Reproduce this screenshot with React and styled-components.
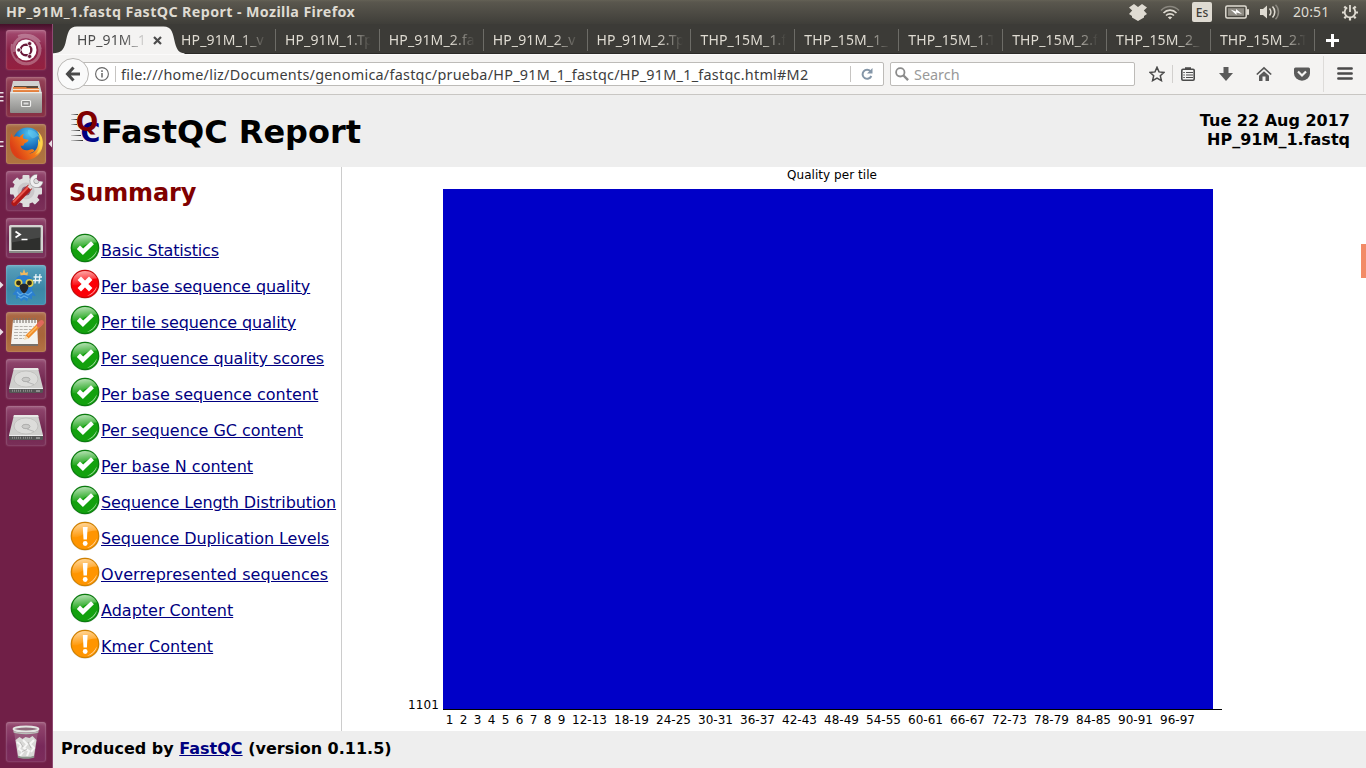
import React from "react";
import styled, { createGlobalStyle } from "styled-components";

const GlobalStyle = createGlobalStyle`
  * { box-sizing: border-box; }
  html, body { margin: 0; padding: 0; }
  body { width: 1366px; height: 768px; overflow: hidden; background: #fff; }
`;

const UI = `"Noto Sans", "Open Sans", sans-serif`;

const Screen = styled.div`
  width: 1366px;
  height: 768px;
  display: flex;
  flex-direction: column;
  overflow: hidden;
  font-family: ${UI};
  svg { display: block; flex: none; }
`;

/* ---------- top panel ---------- */
const Panel = styled.header`
  height: 24px;
  flex: none;
  display: flex;
  align-items: center;
  justify-content: space-between;
  padding: 0 7px 0 6px;
  background: linear-gradient(#646155 0, #5a574e 2px, #3f3e39 100%);
  color: #dfdbd2;
`;
const WindowTitle = styled.div`
  font-size: 14.25px;
  letter-spacing: 0.4px;
  font-weight: 700;
  line-height: 24px;
  white-space: nowrap;
`;
const Indicators = styled.div`
  display: flex;
  align-items: center;
  height: 24px;
`;
const Indicator = styled.div`
  width: ${(p) => p.$w}px;
  margin-right: ${(p) => p.$gap || 0}px;
`;
const Lang = styled.div`
  width: 20px;
  height: 20px;
  margin-right: 13px;
  border-radius: 2px;
  background: #dfdbd2;
  color: #3f3e39;
  font-size: 12px;
  line-height: 21px;
  font-weight: 500;
  text-align: center;
`;
const Clock = styled.div`
  width: 48px;
  font-size: 14px;
  line-height: 24px;
  letter-spacing: 0.1px;
`;

const Desktop = styled.div`
  flex: 1;
  min-height: 0;
  display: flex;
`;

/* ---------- launcher ---------- */
const Launcher = styled.nav`
  width: 53px;
  flex: none;
  display: flex;
  flex-direction: column;
  gap: 7px;
  padding: 6px 0 6px 6px;
  background: linear-gradient(#451029 0, #6b1d44 8px, #701f47 45px, #701f47 100%);
  border-right: 1px solid #8f4a72;
`;
const Tile = styled.div`
  position: relative;
  width: 40px;
  height: 40px;
  flex: none;
  margin-top: ${(p) => (p.$last ? "auto" : 0)};
  border-radius: 3px;
  background: ${(p) => p.$bg};
  box-shadow: inset 0 0 0 1px rgba(255, 255, 255, 0.08), inset 0 2px 3px rgba(255, 255, 255, 0.16),
    0 0 2px rgba(255, 255, 255, 0.2);
`;
const Pips = styled.svg`
  position: absolute;
  left: -6px;
  top: 12px;
`;
const FocusPip = styled.svg`
  position: absolute;
  right: -6px;
  top: 15px;
`;

/* ---------- browser ---------- */
const Browser = styled.div`
  flex: 1;
  min-width: 0;
  display: flex;
  flex-direction: column;
`;
const TabBar = styled.div`
  height: 30px;
  flex: none;
  display: flex;
  background: #3c3b37;
  box-shadow: inset 0 -1px 0 #2b2a27;
`;
const ActiveTab = styled.div`
  position: relative;
  width: 119px;
  height: 30px;
  flex: none;
  display: flex;
  align-items: center;
  padding: 2px 0 0 24px;
  color: #4c4c4c;
`;
const ActiveShape = styled.svg`
  position: absolute;
  left: 0;
  top: 0;
`;
const Tab = styled.div`
  width: 103.9px;
  height: 30px;
  flex: none;
  display: flex;
  align-items: center;
  padding: 2px 0 0 9px;
  color: #dfdbd2;
  background: linear-gradient(#6d6c67, #6d6c67) right 5px / 1px 22px no-repeat;
`;
const TabLabel = styled.span`
  position: relative;
  width: ${(p) => p.$w}px;
  white-space: nowrap;
  font-size: 14px;
  line-height: 20px;
  letter-spacing: 0.15px;
  mask-image: linear-gradient(to right, #000 calc(100% - 25px), transparent);
`;
const CloseIcon = styled.svg`
  position: relative;
  margin-left: 5px;
`;
const NewTab = styled.div`
  height: 30px;
  display: flex;
  align-items: center;
  padding: 2px 0 0 11px;
`;

const NavBar = styled.div`
  height: 41px;
  flex: none;
  display: flex;
  align-items: center;
  padding-bottom: 1px;
  background: #f4f3f2;
  border-bottom: 1px solid #c8c6c3;
  border-top: 1px solid #fbfafa;
`;
const BackButton = styled.div`
  position: relative;
  z-index: 1;
  width: 32px;
  height: 32px;
  margin-left: 4px;
  flex: none;
  border-radius: 50%;
  border: 1px solid #b9b7b4;
  background: #fafafa;
  display: flex;
  align-items: center;
  justify-content: center;
`;
const UrlBar = styled.div`
  width: 803px;
  height: 24px;
  margin-left: -8px;
  padding: 0 10px 0 13px;
  flex: none;
  display: flex;
  align-items: center;
  background: #fff;
  border: 1px solid #bdbbb8;
  border-radius: 2px;
`;
const Divider = styled.div`
  width: 1px;
  height: ${(p) => p.$h}px;
  margin: 0 ${(p) => p.$r}px 0 ${(p) => p.$l}px;
  background: ${(p) => p.$c || "#c6c4c2"};
  flex: none;
`;
const Url = styled.div`
  flex: 1;
  padding-top: 1px;
  white-space: nowrap;
  font-size: 14.4px;
  letter-spacing: 0.25px;
  line-height: 22px;
  color: #3d3d3d;
`;
const SearchBox = styled.div`
  width: 245px;
  height: 24px;
  margin-left: 6px;
  padding-left: 4px;
  flex: none;
  display: flex;
  align-items: center;
  gap: 5px;
  background: #fff;
  border: 1px solid #bdbbb8;
  border-radius: 2px;
  font-size: 14.4px;
  letter-spacing: 0;
  color: #999;
`;
const Tool = styled.div`
  width: 16px;
  margin-left: ${(p) => p.$l}px;
  flex: none;
`;

/* ---------- report page ---------- */
const Page = styled.main`
  position: relative;
  flex: 1;
  min-height: 0;
  display: flex;
  flex-direction: column;
  background: #fff;
  font-family: "DejaVu Sans", sans-serif;
  color: #000;
`;
const ReportHeader = styled.div`
  height: 72px;
  flex: none;
  display: flex;
  justify-content: space-between;
  padding: 0 16px 0 16px;
  background: #eee;
  font-weight: 700;
`;
const Brand = styled.div`
  display: flex;
  padding-top: 15px;
`;
const ReportTitle = styled.h1`
  margin: 0;
  font-size: 32px;
  line-height: 44px;
  font-weight: 700;
  white-space: nowrap;
`;
const FileInfo = styled.div`
  padding-top: 16px;
  text-align: right;
  font-size: 16px;
  line-height: 19px;
`;
const Body = styled.div`
  flex: 1;
  min-height: 0;
  display: flex;
`;
const Summary = styled.aside`
  width: 289px;
  flex: none;
  padding-left: 16px;
  border-right: 1px solid #ccc;
`;
const SummaryTitle = styled.h2`
  margin: 12px 0 24px;
  font-size: 24px;
  line-height: 29px;
  font-weight: 700;
  letter-spacing: -0.1px;
  color: #800000;
`;
const Modules = styled.ul`
  list-style: none;
  margin: 0;
  padding: 0;
`;
const Module = styled.li`
  height: 36px;
  display: flex;
  align-items: flex-start;
`;
const ModuleLink = styled.a`
  padding-top: 9px;
  font-size: 16px;
  line-height: 19px;
  letter-spacing: ${(p) => p.$track}px;
  color: #000080;
  text-decoration: underline;
  white-space: nowrap;
`;
const ChartArea = styled.section`
  flex: 1;
  min-width: 0;
`;
const Footer = styled.footer`
  height: 37px;
  flex: none;
  padding: 8px 0 0 8px;
  background: #eee;
  font-size: 16px;
  line-height: 19px;
  font-weight: 700;
`;
const FooterLink = styled.a`
  color: #000080;
  text-decoration: underline;
`;
const ScrollThumb = styled.div`
  position: absolute;
  right: 0;
  top: 149px;
  width: 5px;
  height: 34px;
  background: #f28b67;
`;

const STATUS = {
  pass: { base: "#13a10e", edge: "#0b7a10", light: "#d5edd3" },
  fail: { base: "#fb0007", edge: "#c40a0a", light: "#ffc9c6" },
  warn: { base: "#ff9500", edge: "#cf8000", light: "#ffe2b5" },
};

function StatusIcon({ kind }) {
  const c = STATUS[kind];
  const id = "g-" + kind;
  return (
    <svg width="32" height="32" viewBox="0 0 32 32">
      <defs>
        <linearGradient id={id} x1="0.3" y1="0" x2="0.5" y2="1">
          <stop offset="0" stopColor={c.light} />
          <stop offset="1" stopColor={c.base} />
        </linearGradient>
      </defs>
      <circle cx="16" cy="16.200" r="14.600" fill="#ddd" opacity="0.7" />
      <circle cx="16" cy="16" r="13.700" fill={c.base} stroke={c.edge} strokeWidth="1.200" />
      <path d="M3.600 17C2.600 8 9 3 16 3c6 0 10.500 3.500 12 7.500C22 10.500 17 12 13 15c-3 2-6 3-9.400 2z" fill={`url(#${id})`} opacity="0.85" />
      <path d="M27.800 18.500c-.8 4.500-4.500 8.400-9.800 9.500 4.500-2 7.800-5 9.800-9.500z" fill="#fff" opacity="0.7" />
      {kind === "pass" && <path d="M7.800 17l3.200-3.400 3.200 2.800 7.800-7.200 2.900 3-11 10.800z" fill="#fff" />}
      {kind === "fail" && <path d="M10.300 10.300l11.400 11.400M21.700 10.300l-11.400 11.400" stroke="#fff" strokeWidth="4.800" />}
      {kind === "warn" && (
        <g fill="#fff">
          <path d="M13.800 7h4.800l-.7 12.500h-3.400z" />
          <circle cx="16.200" cy="23.500" r="2.400" />
        </g>
      )}
    </svg>
  );
}

const MODULES = [
  ["pass", "Basic Statistics", -0.17],
  ["fail", "Per base sequence quality", -0.06],
  ["pass", "Per tile sequence quality", -0.1],
  ["pass", "Per sequence quality scores", -0.03],
  ["pass", "Per base sequence content", 0],
  ["pass", "Per sequence GC content", -0.03],
  ["pass", "Per base N content", 0],
  ["pass", "Sequence Length Distribution", -0.09],
  ["warn", "Sequence Duplication Levels", -0.09],
  ["warn", "Overrepresented sequences", 0.06],
  ["pass", "Adapter Content", 0],
  ["warn", "Kmer Content", 0.08],
];

const TICKS = [
  ...Array.from({ length: 9 }, (_, i) => ({ slot: i, label: String(i + 1) })),
  ...Array.from({ length: 15 }, (_, i) => ({ slot: 10 + 3 * i, label: `${12 + 6 * i}-${13 + 6 * i}` })),
];

function TileChart() {
  return (
    <svg width="1024" height="564" viewBox="342 167 1024 564" fontFamily='"DejaVu Sans", sans-serif' fontSize="12" fill="#000">
      <text x="832" y="179" textAnchor="middle" textLength="90">Quality per tile</text>
      <rect x="443" y="189" width="770" height="520" fill="#0000c8" />
      <rect x="443" y="709" width="779" height="1" />
      <text x="408" y="709" textLength="31">1101</text>
      {TICKS.map((t) => (
        <text key={t.slot} x={449.5 + t.slot * 14} y="724" textAnchor="middle">
          {t.label}
        </text>
      ))}
    </svg>
  );
}

function FastQCLogo() {
  return (
    <svg width="32" height="34" viewBox="0 0 32 34" fontFamily='"DejaVu Sans", sans-serif' fontWeight="700">
      <defs>
        <linearGradient id="speed" x1="0" x2="1">
          <stop offset="0" stopColor="#ccc" />
          <stop offset="1" stopColor="#333" />
        </linearGradient>
      </defs>
      <g fill="url(#speed)">
        <rect x="2" y="4" width="7" height="1" />
        <rect x="2" y="9" width="6" height="1" />
        <rect x="2" y="14" width="6" height="1" />
        <rect x="2" y="20" width="9" height="1" />
        <rect x="2" y="25" width="10" height="1" />
        <rect x="2" y="30" width="12" height="1" />
      </g>
      <text x="11.500" y="31.500" fontSize="27" fill="#000080">C</text>
      <text x="6.800" y="21.300" fontSize="26.500" fill="#800000">Q</text>
    </svg>
  );
}

/* ---------- launcher drawings ---------- */
const UbuntuIcon = () => (
  <svg width="40" height="40" viewBox="0 0 40 40">
    <g fill="none" stroke="#fff" opacity="0.28" strokeWidth="3">
      <path d="M8 22C6 12 14 5 23 7c7 2 11 7 11 12" />
      <path d="M31 12c6 8 2 18-6 21-6 2-12 0-15-4" />
      <path d="M6 14c-2 10 3 18 12 20" strokeWidth="2" />
      <path d="M12 6c8-3 17-1 22 6" strokeWidth="2" />
    </g>
    <circle cx="20" cy="20" r="10.500" fill="#fff" />
    <circle cx="20" cy="20" r="5.300" fill="none" stroke="#6a1a3a" strokeWidth="2.400" />
    <g stroke="#fff" strokeWidth="1.200">
      <path d="M20 20l4.500-8M20 20l4.500 8M20 20h-9" opacity="0.9" />
    </g>
    <circle cx="20" cy="20" r="4.100" fill="#fff" />
    <g fill="#6a1a3a" stroke="#fff" strokeWidth="0.700">
      <circle cx="12.800" cy="20" r="2.100" />
      <circle cx="23.600" cy="13.600" r="2.100" />
      <circle cx="23.600" cy="26.400" r="2.100" />
    </g>
  </svg>
);
const FilesIcon = () => (
  <svg width="40" height="40" viewBox="0 0 40 40">
    <defs>
      <linearGradient id="cab" x2="0" y2="1">
        <stop offset="0" stopColor="#c9c9c6" />
        <stop offset="1" stopColor="#8c8c8a" />
      </linearGradient>
    </defs>
    <path d="M7 4h26l3 13H4z" fill="#d2d2d0" />
    <path d="M8 9h24v8H8z" fill="#5b4a3c" />
    <path d="M7 10h13l1 1h12v5H7z" fill="#e47f3b" />
    <path d="M7 12.500h26" stroke="#fbe2c8" strokeWidth="1.200" />
    <rect x="4" y="15" width="32" height="21" rx="1" fill="url(#cab)" />
    <path d="M4.500 15.700h31" stroke="#f2f2f0" />
    <rect x="15.500" y="23.500" width="9" height="6" rx="1" fill="#8a8a88" stroke="#f0f0ee" strokeWidth="1.200" />
    <rect x="17.500" y="25.500" width="5" height="2" fill="#ddd" />
  </svg>
);
const FirefoxIcon = () => (
  <svg width="40" height="40" viewBox="0 0 40 40">
    <defs>
      <radialGradient id="globe" cx="0.55" cy="0.2" r="0.8">
        <stop offset="0" stopColor="#4fc4f0" />
        <stop offset="0.6" stopColor="#1a6dbb" />
        <stop offset="1" stopColor="#123e80" />
      </radialGradient>
      <linearGradient id="fox" x1="0.2" x2="0.9" y1="0.8" y2="0.4">
        <stop offset="0" stopColor="#dc3f16" />
        <stop offset="0.6" stopColor="#f27a1a" />
        <stop offset="1" stopColor="#ffd34a" />
      </linearGradient>
    </defs>
    <circle cx="21.500" cy="18" r="14.500" fill="url(#globe)" />
    <path d="M22 6c3-1 8 1 11 6-3 0-4 3-7 2-2-2-5-4-4-8z" fill="#69cdf2" opacity="0.5" />
    <path d="M6 9c0 2 .5 3 1.500 4 2-1 4-1 6 .2 1-2 2.500-3 4.500-3.200-1 1.500-1.500 3-.5 4.500 1 1 3 .8 5 1.200-.2 2-2 2.500-4.500 4 .5 2-1.500 2-3.500 2 1 4 5 5.500 9 4 2-1 4-.5 5 .8-1.500 2-4 2.500-6 3.200C30 29 33 23 32 15c1.500 1 2 3 2.200 4C34.500 15 34 11 31 7c5 3.500 6.500 9 5.500 15-1 8-8 14-17 14C10 36 4 29.500 4 20c0-5 0-8 2-11z" fill="url(#fox)" />
    <path d="M32 11c3 6 3 15-3 20 5-2 7.500-7 7.500-12 0-3-1.500-6-4.500-8z" fill="#ffd34a" opacity="0.75" />
  </svg>
);
const SettingsIcon = () => (
  <svg width="40" height="40" viewBox="0 0 40 40">
    <g fill="#dedede">
      {[0, 45, 90, 135].map((a) => (
        <rect key={a} x="16.500" y="4" width="7" height="32" rx="1" transform={`rotate(${a} 20 20)`} />
      ))}
      <circle cx="20" cy="20" r="13" />
    </g>
    <circle cx="20" cy="20" r="8.500" fill="#cbc8ca" />
    <circle cx="20" cy="20" r="4.500" fill="#8b5c74" />
    <path d="M8.500 32L23 17" stroke="#b01717" strokeWidth="6" strokeLinecap="round" />
    <path d="M7.800 30.800L21.500 16.800" stroke="#ea5a50" strokeWidth="2" strokeLinecap="round" />
    <path d="M23 17l6-6" stroke="#d9d9d9" strokeWidth="4.500" />
    <path d="M31 5.500a4.600 4.600 0 1 0 4 5" fill="none" stroke="#999" strokeWidth="4.600" />
    <path d="M31 5.500a4.600 4.600 0 1 0 4 5" fill="none" stroke="#efefef" strokeWidth="3.300" />
  </svg>
);
const TerminalIcon = () => (
  <svg width="40" height="40" viewBox="0 0 40 40">
    <rect x="3" y="7" width="34" height="28" rx="1.500" fill="#d4d4d1" />
    <path d="M3 33h34v2H3z" fill="#898986" />
    <rect x="5.500" y="9.500" width="29" height="22.500" fill="#2e2f2d" />
    <path d="M5.500 9.500h29v10l-29 5z" fill="#575957" opacity="0.6" />
    <path d="M9.500 13.500l4.500 3-4.500 3" fill="none" stroke="#fff" strokeWidth="1.800" />
    <path d="M15.500 21.500h6" stroke="#fff" strokeWidth="1.500" />
  </svg>
);
const BirdIcon = () => (
  <svg width="40" height="40" viewBox="0 0 40 40">
    <path d="M18 4l-1.500 4-2.500-1 1 6h6l1-6-2.500 1z" fill="#f0b860" />
    <path d="M18 10c6 0 9 3.500 9 9 0 3-1 4-1 6l4 6-4-.5v4l-3.500-2-1.500 4-3-2.500-3 2.500-1.500-4-3.500 1.500v-4l-3.500-.5 4-5.500c-1-2-1.500-3-1.500-5C8.500 13 12 10 18 10z" fill="#2a7fd0" />
    <path d="M11 27l3 3 4-2 4 2 4-3M12 31l3 2 3-2 4 2" fill="none" stroke="#62aee6" strokeWidth="1.200" />
    <circle cx="12.500" cy="18" r="3.200" fill="#2b2b1b" stroke="#e2cf4c" strokeWidth="1.600" />
    <circle cx="23.500" cy="18" r="3.200" fill="#2b2b1b" stroke="#e2cf4c" strokeWidth="1.600" />
    <path d="M13.500 20.500c2-2.500 7-2.500 9 0 0 4-2.500 7-4.500 8-2-1-4.500-4-4.500-8z" fill="#26262a" />
    <path d="M30 9l-1 9.500M34 9l-1 9.500M27.500 12h8.500M27 15.500h8.500" stroke="#eaf4f8" strokeWidth="1.300" />
  </svg>
);
const EditorIcon = () => (
  <svg width="40" height="40" viewBox="0 0 40 40">
    <path d="M7 8h24l1 24H5z" fill="#f4f3ef" />
    <path d="M5 32h27v2H5z" fill="#77706a" />
    <g stroke="#77716b" strokeWidth="1.100">
      {[8, 11, 14, 17, 20, 23, 26, 29].map((x) => (
        <path key={x} d={`M${x} 6v5`} />
      ))}
    </g>
    <g stroke="#b5b2ad" strokeWidth="1" strokeDasharray="4 1.200 3 1">
      <path d="M8.500 14.500h19M8.500 17.500h17M8 20.500h14M8 23.500h12M8 26.500h10" />
    </g>
    <path d="M21 25L34 12" stroke="#f08c28" strokeWidth="4.500" />
    <path d="M22 23.500L33.500 12" stroke="#fbb55f" strokeWidth="1.400" />
    <path d="M33 13l2.500-2.500" stroke="#e0685c" strokeWidth="4.800" strokeLinecap="round" />
    <path d="M19.300 23.300l3.400 3.300-4.700 1.400z" fill="#f2d9ae" />
  </svg>
);
const DiskIcon = () => (
  <svg width="40" height="40" viewBox="0 0 40 40">
    <path d="M8 9h24l5 20H3z" fill="#cfcfcd" />
    <path d="M8 9h24l.6 2H7.500z" fill="#e8e8e6" />
    <ellipse cx="20" cy="20" rx="12" ry="8" fill="#dcdcda" stroke="#bcbcba" strokeWidth="0.800" />
    <ellipse cx="20" cy="20.500" rx="4" ry="2.200" fill="#cacac8" stroke="#a5a5a3" strokeWidth="0.800" />
    <path d="M21 23l7 2.500" stroke="#b5b5b5" />
    <path d="M3 29h34v3.500a1.500 1.500 0 0 1-1.500 1.500h-31A1.500 1.500 0 0 1 3 32.500z" fill="#555" />
    <path d="M3 29h34v1H3z" fill="#eee" />
    <path d="M6 31.800h9M17 31.800h9" stroke="#8a8a8a" strokeDasharray="1 1" strokeWidth="2" />
    <path d="M30 32h4" stroke="#ccc" />
  </svg>
);
const TrashIcon = () => (
  <svg width="40" height="40" viewBox="0 0 40 40">
    <path d="M8 9h24l-3.500 26c-3 2-14 2-17 0z" fill="#cfbec8" opacity="0.25" />
    <path d="M9.500 18l4-3 3 2 3-2 4 1 3-2 4 4-2.500 16c-3 2-13 2-16 0z" fill="#d9d9d7" />
    <path d="M11 20l4 3-2 4 4 3-3 4M17 18l4 4-3 4 5 3-2 5M28 18l-4 4 4 4-3 4" fill="none" stroke="#f7f7f6" strokeWidth="2" />
    <path d="M14 20l3 5M22 20l3 6M16 30l5-3" stroke="#aaa9a7" strokeWidth="0.700" />
    <path d="M12 34.500c3 1.800 13 1.800 16 0" fill="none" stroke="#8d988d" strokeWidth="2" />
    <ellipse cx="20" cy="7" rx="12.500" ry="2.600" fill="#8e6a7b" stroke="#e3e6e2" strokeWidth="2" />
    <path d="M7.500 9.500c3 2.500 22 2.500 25 0" fill="none" stroke="#b8bfb8" strokeWidth="1.500" />
  </svg>
);

const APPS = [
  { icon: UbuntuIcon, bg: "linear-gradient(#a44c72, #8a2348 50%, #95203f)" },
  { icon: FilesIcon, bg: "linear-gradient(#97445a, #7d2a40 60%, #8a3347)", pips: 3 },
  { icon: FirefoxIcon, bg: "linear-gradient(#a5683f, #b07440)", pips: 2, focus: true },
  { icon: SettingsIcon, bg: "linear-gradient(#96486f, #742852 60%, #7c3059)" },
  { icon: TerminalIcon, bg: "linear-gradient(#91466c, #6e2550 50%, #7d315c)" },
  { icon: BirdIcon, bg: "linear-gradient(#58a0bc, #3b86a6 60%, #4190b0)", pips: 1 },
  { icon: EditorIcon, bg: "linear-gradient(#ab6845, #a8653a 60%, #b47344)", pips: 1 },
  { icon: DiskIcon, bg: "linear-gradient(#92486f, #70264f 60%, #7a2f58)" },
  { icon: DiskIcon, bg: "linear-gradient(#92486f, #70264f 60%, #7a2f58)" },
  { icon: TrashIcon, bg: "linear-gradient(#95496f, #78295a 60%, #7c2c5b)", last: true },
];

function LauncherPips({ count }) {
  return (
    <Pips width="5" height="16" viewBox="0 0 5 16" fill="#e9dfe5">
      {count === 1 && <path d="M0 4.500L3.500 8 0 11.500z" />}
      {count === 2 && <path d="M0 5h3.500v1.500H0zM0 9.500h3.500V11H0z" />}
      {count === 3 && <path d="M0 3h3.500v1.400H0zM0 7h3.500v1.400H0zM0 11h3.500v1.400H0z" />}
    </Pips>
  );
}

const TABS = [
  "HP_91M_1_v", "HP_91M_1.Tp", "HP_91M_2.fa", "HP_91M_2_v", "HP_91M_2.Tp",
  "THP_15M_1.f", "THP_15M_1_", "THP_15M_1.T", "THP_15M_2.f", "THP_15M_2_", "THP_15M_2.T",
];

export default function App() {
  return (
    <Screen>
      <GlobalStyle />
      <Panel>
        <WindowTitle>HP_91M_1.fastq FastQC Report - Mozilla Firefox</WindowTitle>
        <Indicators>
          <Indicator $w={18} $gap={13}>
            <svg width="18" height="18" viewBox="0 0 18 18" fill="#dfdbd2">
              <path d="M5 1l4 3 4-3 5 3.500-3.200 3L18 11l-3 2v1.500L9 18l-6-3.500V13l-3-2 3.200-3.500L0 4.500z" />
            </svg>
          </Indicator>
          <Indicator $w={20} $gap={12}>
            <svg width="20" height="16" viewBox="0 0 20 16" fill="none" strokeWidth="1.600">
              <path d="M1 6.500C6 1.200 14 1.200 19 6.500" stroke="#8a877f" />
              <path d="M3.500 9c3.600-3.800 9.400-3.800 13 0" stroke="#dfdbd2" />
              <path d="M6 11.500c2.200-2.200 5.800-2.200 8 0" stroke="#dfdbd2" />
              <path d="M7.800 13.300L10 15.600l2.200-2.300c-1.300-1.100-3.100-1.100-4.400 0z" fill="#dfdbd2" />
            </svg>
          </Indicator>
          <Lang>Es</Lang>
          <Indicator $w={24} $gap={11}>
            <svg width="24" height="14" viewBox="0 0 24 14">
              <rect x="0.800" y="1" width="20.400" height="12" rx="1.500" fill="none" stroke="#dfdbd2" strokeWidth="1.500" />
              <rect x="22" y="4" width="2" height="6" rx="0.800" fill="#dfdbd2" />
              <rect x="3" y="3.200" width="16" height="7.600" fill="#8f8c84" />
              <path d="M5.500 4.500l5.500 2V4l6 5-5.500-1.500v2.500z" fill="#fff" />
            </svg>
          </Indicator>
          <Indicator $w={20} $gap={13}>
            <svg width="20" height="16" viewBox="0 0 20 16" fill="none">
              <path d="M0 5h3l4-3.500v13L3 11H0z" fill="#dfdbd2" />
              <path d="M9.500 4.500c1.800 2 1.800 5 0 7M12.500 2.500c3 3 3 8 0 11" stroke="#dfdbd2" strokeWidth="1.600" />
              <path d="M15.500.8c4 4 4 10.400 0 14.400" stroke="#8a877f" strokeWidth="1.500" />
            </svg>
          </Indicator>
          <Clock>20:51</Clock>
          <svg width="18" height="18" viewBox="0 0 18 18" fill="none" stroke="#dfdbd2">
            <path d="M6.200 4.600a5.300 5.300 0 1 0 5.600 0" strokeWidth="1.800" />
            <path d="M9 2v7" strokeWidth="1.800" />
            <path d="M9 15v2.500M1 9.500h2.500M14.500 9.500H17M3.300 3.500L5 5.300M14.700 3.500L13 5.300M3.300 15.300L5 13.600M14.700 15.300L13 13.600" strokeWidth="2.200" />
          </svg>
        </Indicators>
      </Panel>

      <Desktop>
        <Launcher>
          {APPS.map((a, i) => (
            <Tile key={i} $bg={a.bg} $last={a.last}>
              <a.icon />
              {a.pips && <LauncherPips count={a.pips} />}
              {a.focus && (
                <FocusPip width="5" height="10" viewBox="0 0 5 10" fill="#e9dfe5">
                  <path d="M5 1v7.500L1.500 4.750z" />
                </FocusPip>
              )}
            </Tile>
          ))}
        </Launcher>

        <Browser>
          <TabBar>
            <ActiveTab>
              <ActiveShape width="132" height="30" viewBox="0 0 132 30">
                <path d="M0 30v-.8C8 29 10.500 26 12.500 19 14.800 9 15.500 2.500 24 2.500h86.500c8.500 0 9.300 6.500 11.500 16.500 2 7 4 10 9.500 10.200V30z" fill="#f4f3f2" />
              </ActiveShape>
              <TabLabel $w={71}>HP_91M_1</TabLabel>
              <CloseIcon width="9" height="9" viewBox="0 0 9 9" stroke="#4c4c4c" strokeWidth="2.200">
                <path d="M1 1l7 7M8 1L1 8" />
              </CloseIcon>
            </ActiveTab>
            {TABS.map((t) => (
              <Tab key={t}>
                <TabLabel $w={86}>{t}</TabLabel>
              </Tab>
            ))}
            <NewTab>
              <svg width="13" height="13" viewBox="0 0 13 13" stroke="#fff" strokeWidth="3">
                <path d="M6.500 0v13M0 6.500h13" />
              </svg>
            </NewTab>
          </TabBar>

          <NavBar>
            <BackButton>
              <svg width="16" height="16" viewBox="0 0 16 16" fill="none" stroke="#4a4a4a" strokeWidth="3">
                <path d="M8.500 1.500L2.500 8l6 6.500M3 8h12" />
              </svg>
            </BackButton>
            <UrlBar>
              <svg width="14" height="14" viewBox="0 0 14 14" fill="none" stroke="#666">
                <circle cx="7" cy="7" r="6.400" strokeWidth="1.100" />
                <path d="M7 6v4.500M7 3.300v1.600" strokeWidth="1.500" />
              </svg>
              <Divider $h={16} $l={6} $r={5} />
              <Url>file:///home/liz/Documents/genomica/fastqc/prueba/HP_91M_1_fastqc/HP_91M_1_fastqc.html#M2</Url>
              <Divider $h={16} $l={0} $r={10} />
              <svg width="12" height="12" viewBox="0 0 12 12" fill="none">
                <path d="M9.500 3.300A4.500 4.500 0 1 0 10.300 8" stroke="#8496a8" strokeWidth="2" />
                <path d="M11.500 0v5.500H6z" fill="#8496a8" />
              </svg>
            </UrlBar>
            <SearchBox>
              <svg width="14" height="14" viewBox="0 0 14 14" fill="none" stroke="#8b8b8b">
                <circle cx="5.300" cy="5.300" r="4.200" strokeWidth="1.800" />
                <path d="M8.500 8.500l4.600 4.600" strokeWidth="2.400" />
              </svg>
              Search
            </SearchBox>
            <Tool $l={14}>
              <svg width="16" height="16" viewBox="0 0 16 16" fill="none" stroke="#4a4a4a" strokeWidth="1.500">
                <path d="M8 1.300l2 4.600 5 .5-3.700 3.300 1.100 4.900L8 12l-4.400 2.600 1.100-4.900L1 6.400l5-.5z" />
              </svg>
            </Tool>
            <Divider $h={18} $l={7} $r={0} $c="#d2d0ce" />
            <Tool $l={7}>
              <svg width="16" height="16" viewBox="0 0 16 16" fill="none" stroke="#4a4a4a">
                <rect x="1.800" y="3.300" width="12.400" height="11" rx="1.200" strokeWidth="1.600" />
                <path d="M5 2.500h6" strokeWidth="2.500" />
                <path d="M6 6.500h7M6 9h7M6 11.500h7M3.300 6.500h1.500M3.300 9h1.500M3.300 11.500h1.500" strokeWidth="1.200" />
              </svg>
            </Tool>
            <Tool $l={22}>
              <svg width="16" height="16" viewBox="0 0 16 16" fill="#5a5a5a">
                <path d="M5.500 1h5v6H15l-7 8-7-8h4.500z" />
              </svg>
            </Tool>
            <Tool $l={22}>
              <svg width="16" height="16" viewBox="0 0 16 16">
                <path d="M.8 8.500L8 1.800l7.200 6.700" fill="none" stroke="#555" strokeWidth="1.700" />
                <path d="M3 9.800l5-4.500 5 4.500V15H9.500v-4.500h-3V15H3z" fill="#5a5a5a" />
              </svg>
            </Tool>
            <Tool $l={22}>
              <svg width="16" height="16" viewBox="0 0 16 16">
                <path d="M1.500 1.500h13A1.500 1.500 0 0 1 16 3v4.500a8 7.200 0 0 1-16 0V3a1.500 1.500 0 0 1 1.500-1.500z" fill="#5a5a5a" />
                <path d="M4 5.500l4 4 4-4" fill="none" stroke="#f4f3f2" strokeWidth="2.200" />
              </svg>
            </Tool>
            <Divider $h={36} $l={13} $r={0} $c="#dddbd9" />
            <Tool $l={13}>
              <svg width="16" height="16" viewBox="0 0 16 16" stroke="#4a4a4a" strokeWidth="2.400" strokeLinecap="round">
                <path d="M1.300 2.500h13.400M1.300 7.500h13.400M1.300 12.500h13.400" />
              </svg>
            </Tool>
          </NavBar>

          <Page>
            <ReportHeader>
              <Brand>
                <FastQCLogo />
                <ReportTitle>FastQC Report</ReportTitle>
              </Brand>
              <FileInfo>
                Tue 22 Aug 2017
                <br />
                HP_91M_1.fastq
              </FileInfo>
            </ReportHeader>
            <Body>
              <Summary>
                <SummaryTitle>Summary</SummaryTitle>
                <Modules>
                  {MODULES.map(([kind, label, track]) => (
                    <Module key={label}>
                      <StatusIcon kind={kind} />
                      <ModuleLink $track={track}>{label}</ModuleLink>
                    </Module>
                  ))}
                </Modules>
              </Summary>
              <ChartArea>
                <TileChart />
              </ChartArea>
            </Body>
            <Footer>
              Produced by <FooterLink>FastQC</FooterLink> (version 0.11.5)
            </Footer>
            <ScrollThumb />
          </Page>
        </Browser>
      </Desktop>
    </Screen>
  );
}
